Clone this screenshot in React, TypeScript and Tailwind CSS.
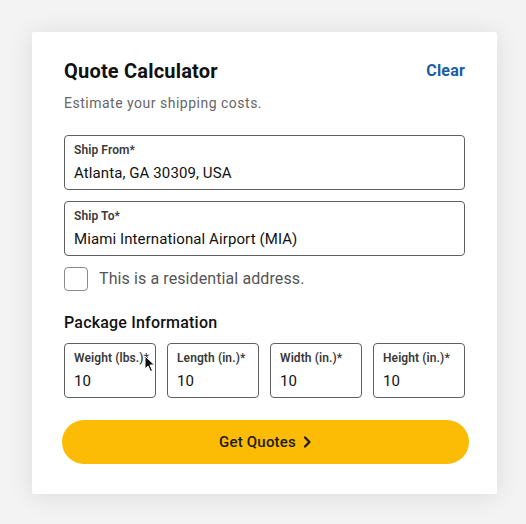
import React from "react";

function Field({ label, value }: { label: string; value: string }) {
  return (
    <div className="h-[55px] rounded-[4px] border border-[#5f5f5f] bg-white pl-[9px] pt-[6px]">
      <div className="text-[12px] leading-[16px] font-semibold text-[#3a3a3a] tracking-[0.1px]">{label}</div>
      <div className="mt-[5px] text-[15px] leading-[20px] text-[#111] tracking-[0.1px]">{value}</div>
    </div>
  );
}

export default function App() {
  return (
    <div
      className="min-h-[524px] w-full bg-[#f3f3f3] pt-[32px] pl-[32px]"
      style={{ fontFamily: "Roboto, 'Liberation Sans', sans-serif" }}
    >
      <div className="relative w-[465px] h-[462px] rounded-[2px] bg-white px-[32px] pt-[25px] shadow-[0_2px_24px_rgba(0,0,0,0.10)]">
        <div className="flex items-center justify-between">
          <h1 className="text-[20px] leading-[28px] font-bold text-[#111] tracking-[0.2px]">Quote Calculator</h1>
          <button className="text-[16px] leading-[28px] font-bold text-[#1a5da6] tracking-[0.2px]">Clear</button>
        </div>
        <p className="mt-[8px] text-[14px] leading-[20px] text-[#666] tracking-[0.5px]">
          Estimate your shipping costs.
        </p>

        <div className="mt-[22px] flex flex-col gap-[11px]">
          <Field label="Ship From*" value="Atlanta, GA 30309, USA" />
          <Field label="Ship To*" value="Miami International Airport (MIA)" />
        </div>

        <label className="mt-[11px] flex items-center gap-[11px]">
          <span className="h-[24px] w-[24px] rounded-[4px] border border-[#8a8a8a] bg-white" />
          <span className="text-[16px] leading-[24px] text-[#555] tracking-[0.1px]">This is a residential address.</span>
        </label>

        <h2 className="mt-[20px] text-[16px] leading-[24px] font-medium text-[#111] tracking-[0.2px]">Package Information</h2>

        <div className="mt-[8px] grid grid-cols-4 gap-[11px]">
          <Field label="Weight (lbs.)*" value="10" />
          <Field label="Length (in.)*" value="10" />
          <Field label="Width (in.)*" value="10" />
          <Field label="Height (in.)*" value="10" />
        </div>

        <button className="mt-[22px] ml-[-2px] flex h-[44px] w-[407px] items-center justify-center gap-[6px] rounded-full bg-[#fcbc05] text-[15px] font-medium text-[#1e1a10] tracking-[0.2px]">
          Get Quotes
          <svg width="10" height="12" viewBox="0 0 10 12" fill="none">
            <path d="M3 1.5 L7.5 6 L3 10.5" stroke="#1e1a10" strokeWidth="2.2" strokeLinecap="round" strokeLinejoin="round" />
          </svg>
        </button>

        <svg
          className="absolute left-[112px] top-[323px]"
          width="12"
          height="18"
          viewBox="0 0 12 18"
        >
          <path d="M1 1 L1 14 L4 11 L6.5 16.5 L8.5 15.5 L6 10 L10.5 10 Z" fill="#111" stroke="#fff" strokeWidth="1" strokeLinejoin="round" />
        </svg>
      </div>
    </div>
  );
}
